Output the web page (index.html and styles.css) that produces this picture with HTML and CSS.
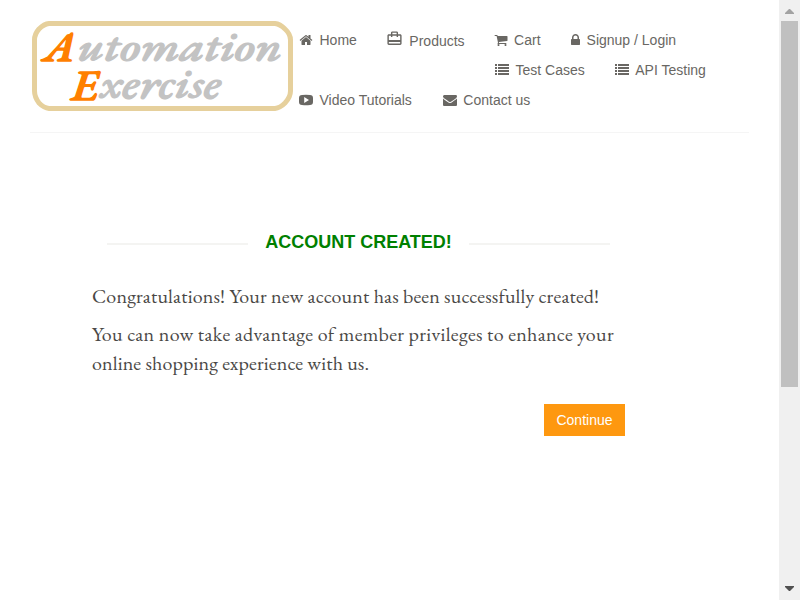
FILE: index.html
```html
<!DOCTYPE html>
<html lang="en">
<head>
<meta charset="utf-8">
<title>Automation Exercise - Account Created</title>
<link rel="stylesheet" href="styles.css">
</head>
<body>
<div class="page">
  <header class="header">
    <a class="logo" aria-label="Automation Exercise">
      <svg width="262" height="92" viewBox="0 0 262 92">
        <path class="logo-frame" d="M18 3.500H244Q249 4 254 9Q259.500 14 259.500 20V71Q259.500 77 254 83Q249 88 244 88.500H18Q13 88 8 83Q3.500 77 3.500 71V20Q3.500 14 8 9Q13 4 18 3.500Z"/>
        <g class="logo-text">
          <text class="logo-cap" x="13" y="41" font-size="43" textLength="31" lengthAdjust="spacingAndGlyphs">A</text>
          <text x="47" y="41" font-size="42" textLength="204" lengthAdjust="spacingAndGlyphs">utomation</text>
          <text class="logo-cap" x="41" y="80" font-size="43" textLength="26" lengthAdjust="spacingAndGlyphs">E</text>
          <text x="69" y="78" font-size="42" textLength="121" lengthAdjust="spacingAndGlyphs">xercise</text>
        </g>
      </svg>
    </a>
    <nav class="nav">
      <div class="nav-row">
        <a class="nav-item"><svg class="icon" viewBox="0 0 1792 1792"><path d="M1472 992v480q0 26-19 45t-45 19h-384v-384h-256v384h-384q-26 0-45-19t-19-45v-480q0-1 .5-3t.5-3l575-474 575 474q1 2 1 6zm223-69l-62 74q-8 9-21 11h-3q-13 0-21-7l-692-577-692 577q-12 8-24 7-13-2-21-11l-62-74q-8-10-7-23.500t11-21.500l719-599q32-26 76-26t76 26l244 204v-195q0-14 9-23t23-9h192q14 0 23 9t9 23v408l219 182q10 8 11 21.500t-7 23.500z"/></svg>Home</a>
        <a class="nav-item products"><svg class="icon icon-case" viewBox="0 0 24 24"><path d="M20 6h-3V4c0-1.110-.89-2-2-2H9c-1.110 0-2 .89-2 2v2H4c-1.110 0-2 .89-2 2v11c0 1.110.89 2 2 2h16c1.110 0 2-.89 2-2V8c0-1.110-.89-2-2-2zM9 4h6v2H9V4zm11 15H4v-2h16v2zm0-5H4V8h3v2h2V8h6v2h2V8h3v6z"/></svg>Products</a>
        <a class="nav-item"><svg class="icon" viewBox="0 0 1792 1792"><path d="M704 1536q0 52-38 90t-90 38-90-38-38-90 38-90 90-38 90 38 38 90zm896 0q0 52-38 90t-90 38-90-38-38-90 38-90 90-38 90 38 38 90zm128-1088v512q0 24-16.500 42.500t-40.500 21.500l-1044 122q13 60 13 70 0 16-24 64h920q26 0 45 19t19 45-19 45-45 19h-1024q-26 0-45-19t-19-45q0-11 8-31.500t16-36 21.500-40 15.500-29.500l-177-823h-204q-26 0-45-19t-19-45 19-45 45-19h256q16 0 28.500 6.500t19.500 15.500 13 24.500 8 26 5.500 29.500 4.500 26h1201q26 0 45 19t19 45z"/></svg>Cart</a>
        <a class="nav-item"><svg class="icon icon-lock" viewBox="320 0 1152 1792"><path d="M640 768h512v-192q0-106-75-181t-181-75-181 75-75 181v192zm832 96v576q0 40-28 68t-68 28h-960q-40 0-68-28t-28-68v-576q0-40 28-68t68-28h32v-192q0-184 132-316t316-132 316 132 132 316v192h32q40 0 68 28t28 68z"/></svg>Signup / Login</a>
      </div>
      <div class="nav-row nav-row-indent">
        <a class="nav-item"><svg class="icon" viewBox="0 0 14 14"><path d="M0 1h2v2H0zM3 1h11v2H3zM0 4h2v2H0zM3 4h11v2H3zM0 7h2v2H0zM3 7h11v2H3zM0 10h2v2H0zM3 10h11v2H3z"/></svg>Test Cases</a>
        <a class="nav-item"><svg class="icon" viewBox="0 0 14 14"><path d="M0 1h2v2H0zM3 1h11v2H3zM0 4h2v2H0zM3 4h11v2H3zM0 7h2v2H0zM3 7h11v2H3zM0 10h2v2H0zM3 10h11v2H3z"/></svg>API Testing</a>
      </div>
      <div class="nav-row">
        <a class="nav-item"><svg class="icon" viewBox="0 0 14 14"><path fill-rule="evenodd" d="M3 2Q7 1.500 11 2Q14 2 14 5V9Q14 12 11 12Q7 12.500 3 12Q0 12 0 9V5Q0 2 3 2ZM5.200 4V10L10 7Z"/></svg>Video Tutorials</a>
        <a class="nav-item contact"><svg class="icon" viewBox="0 0 1792 1792"><path d="M1792 710v794q0 66-47 113t-113 47h-1472q-66 0-113-47t-47-113v-794q44 49 101 87 362 246 497 345 57 42 92.500 65.500t94.500 48 110 24.500h2q51 0 110-24.500t94.500-48 92.500-65.500q170-123 498-345 57-39 100-87zm0-294q0 79-49 151t-122 123q-376 261-468 325-10 7-42.500 31t-54 38.500-52 32.500-57.500 27-50 9h-2q-23 0-50-9t-57.500-27-52-32.500-54-38.500-42.500-31q-91-64-262-182.500t-205-142.500q-62-42-117-115.500t-55-136.500q0-78 41.500-130t118.500-52h1472q65 0 112.500 47t47.500 113z"/></svg>Contact us</a>
      </div>
    </nav>
  </header>
  <main class="content">
    <h2 class="title">Account Created!</h2>
    <p class="line-one">Congratulations! Your new account has been successfully created!</p>
    <p class="line-two"><span class="wide">You can now take advantage of member privileges to enhance your</span><br>online shopping experience with us.</p>
    <div class="actions"><a class="button">Continue</a></div>
  </main>
</div>
<div class="scrollbar">
  <svg class="arrow" width="21" height="21" viewBox="0 0 21 21"><path fill="#a3a3a3" d="M6 14V13L10 9H11L15 13V14Z"/></svg>
  <div class="thumb"></div>
  <svg class="arrow arrow-down" width="21" height="21" viewBox="0 0 21 21"><path fill="#505050" d="M6 7V8L10 12H11L15 8V7Z"/></svg>
</div>
</body>
</html>
```
FILE: styles.css
```css
* { box-sizing: border-box; }
body {
  display: flex;
  height: 600px;
  margin: 0;
  overflow: hidden;
  background: #fff;
  font-family: "Liberation Sans", Arial, sans-serif;
  font-size: 14px;
}
.page { flex: 1; padding: 0 30px; }
.header {
  display: flex;
  height: 133px;
  padding-top: 20px;
  border-bottom: 1px solid #f5f5f5;
}
.logo { width: 262px; margin-left: 1px; }
.logo svg { display: block; overflow: visible; }
.logo-frame { fill: none; stroke: #e6d09c; stroke-width: 5; }
.logo-text {
  font-family: "EB Garamond", "Lato", sans-serif;
  font-style: italic;
  font-weight: 500;
  fill: #c3c3c3;
  stroke: #c3c3c3;
  stroke-width: 1.200;
}
.logo-cap { fill: #ff7f00; stroke: #ff7f00; stroke-width: 1.600; }
.nav { padding: 5px 0 0 6px; }
.nav-row { display: flex; gap: 30px; height: 30px; }
.nav-row-indent { padding-left: 196px; }
.nav-row-indent .icon { margin-right: 6.500px; }
.nav-item {
  display: flex;
  align-items: center;
  height: 30px;
  color: #696763;
  white-space: nowrap;
}
.icon { width: 14px; height: 14px; margin-right: 6.500px; fill: currentColor; }
.icon-lock { width: 9px; margin-right: 7px; }
.icon-case { width: 17px; height: 17px; margin: -5px 6px 0 0; }
.products { padding-top: 2px; margin: 0 -1px 0 -0.500px; }
.contact { margin-left: 1px; }
.content { width: 533px; margin: 97px 0 0 62px; }
.title {
  display: flex;
  align-items: center;
  gap: 17px;
  height: 24px;
  margin: 0 15px;
  color: #008000;
  font-size: 18px;
  font-weight: 700;
  text-transform: uppercase;
  white-space: nowrap;
}
.title::before, .title::after {
  content: "";
  flex: 1;
  height: 2px;
  margin-top: 3px;
  background: #f4f4f2;
}
.content p {
  margin: 0;
  color: #4a4846;
  font-family: "EB Garamond", Garamond, "Liberation Serif", serif;
  font-size: 20px;
  line-height: 29px;
  white-space: nowrap;
  letter-spacing: 0.130px;
}
.content .line-one { margin-top: 28px; letter-spacing: 0.160px; }
.content .line-two { margin-top: 9px; }
.content .wide { letter-spacing: 0.300px; }
.actions { display: flex; justify-content: flex-end; margin-top: 26px; }
.button {
  width: 81px;
  height: 32px;
  background: #fe980f;
  color: #fff;
  line-height: 32px;
  text-align: center;
}
.scrollbar {
  display: flex;
  flex-direction: column;
  width: 21px;
  background: #f0f0f0;
}
.arrow { display: block; }
.thumb { width: 17px; height: 366px; margin-left: 2px; background: #c0c0c0; }
.arrow-down { margin-top: auto; }
```
